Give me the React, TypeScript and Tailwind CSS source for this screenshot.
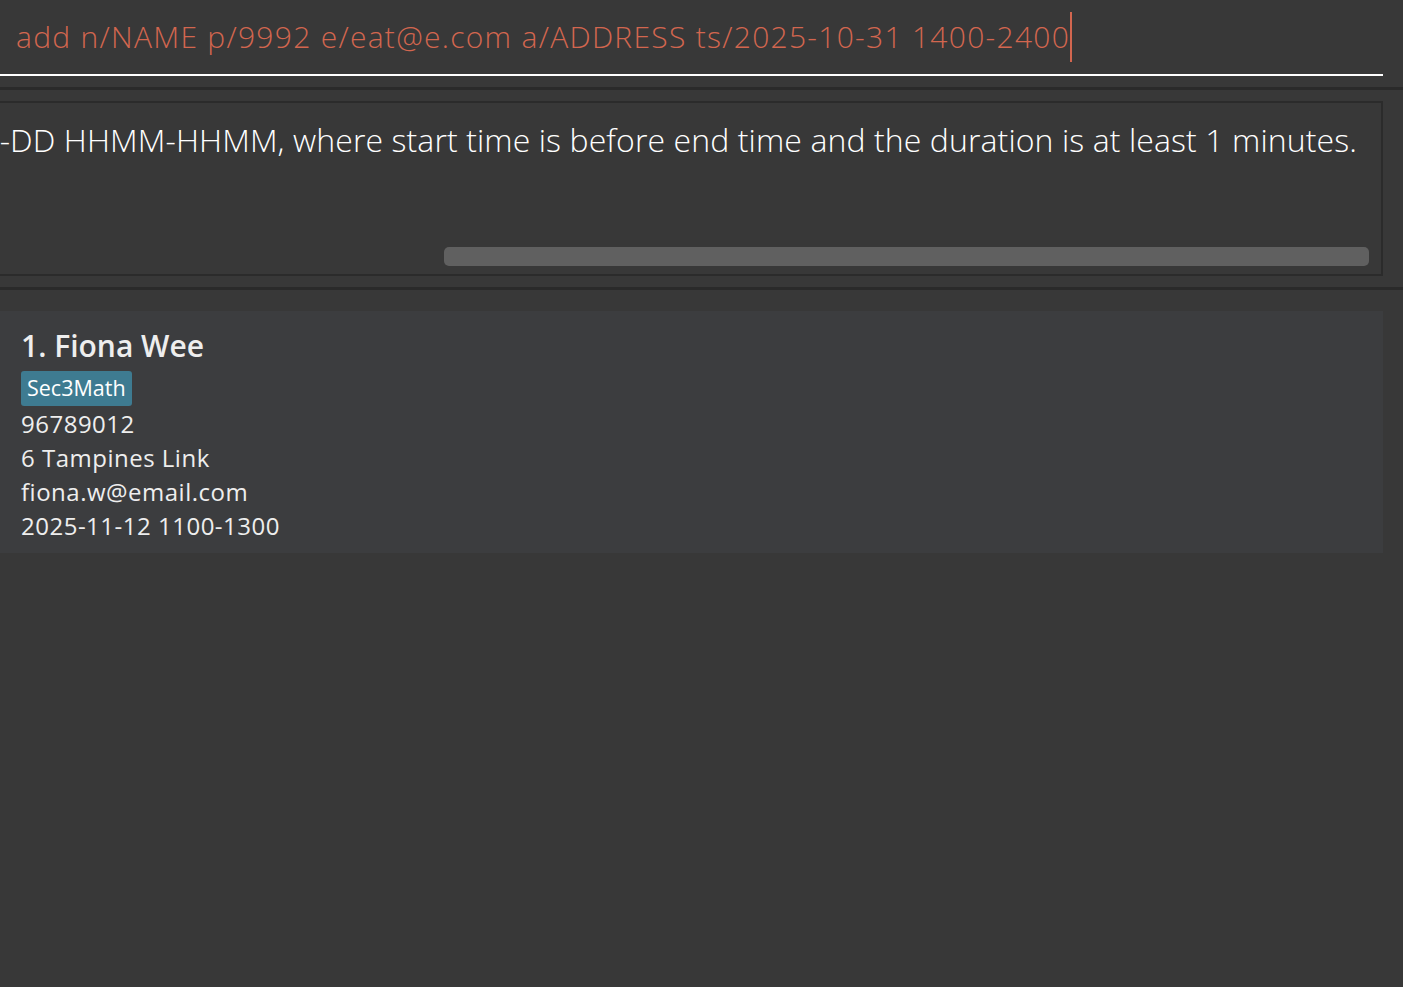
export default function App() {
  return (
    <div className="min-h-[987px] w-full bg-[#383838] overflow-hidden" style={{ fontFamily: '"Open Sans", "Noto Sans", sans-serif' }}>
      {/* command box */}
      <div className="w-[1383px] h-[87px] pt-[12px]">
        <div className="h-[64px] border-b-2 border-white flex items-start">
          <span className="pl-[16px] text-[30px] leading-[50px] font-light text-[#d2664f] whitespace-nowrap tracking-[1.28px]">
            add n/NAME p/9992 e/eat@e.com a/ADDRESS ts/2025-10-31 1400-2400
          </span>
          <span className="w-[2px] h-[50px] bg-[#d2664f]" />
        </div>
      </div>
      <div className="h-[3px] bg-[#2a2a2a]" />

      {/* result box */}
      <div className="pt-[11px] pb-[11px]">
        <div className="w-[1383px] h-[175px] border-2 border-l-0 border-[#2b2b2b] flex flex-col">
          <div className="flex justify-end overflow-hidden pr-[24px] pt-[14px] h-[144px]">
            <span className="text-[32px] leading-[46px] font-light text-white whitespace-nowrap tracking-[0.1px]">
              Timeslot should be in the format YYYY-MM-DD HHMM-HHMM, where start time is before end time and the duration is at least 1 minutes.
            </span>
          </div>
          <div className="flex justify-end pr-[12px]">
            <div className="w-[925px] h-[19px] rounded-[5px] bg-[#606060]" />
          </div>
        </div>
      </div>
      <div className="h-[3px] bg-[#2a2a2a]" />

      {/* person list */}
      <div className="pt-[21px]">
        <div className="w-[1383px] h-[242px] bg-[#3c3d3f] pl-[21px] pt-[15px] flex flex-col items-start text-[#eeeeee]">
          <div className="text-[30px] leading-[40px] font-semibold">1. Fiona Wee</div>
          <div className="mt-[5px] px-[6px] h-[35px] flex items-center rounded-[3px] bg-[#3e7b91] text-white text-[21.5px]">Sec3Math</div>
          <div className="mt-[1px] flex flex-col text-[24px] leading-[34px] tracking-[0.5px]">
            <span>96789012</span>
            <span>6 Tampines Link</span>
            <span>fiona.w@email.com</span>
            <span>2025-11-12 1100-1300</span>
          </div>
        </div>
      </div>
    </div>
  );
}
